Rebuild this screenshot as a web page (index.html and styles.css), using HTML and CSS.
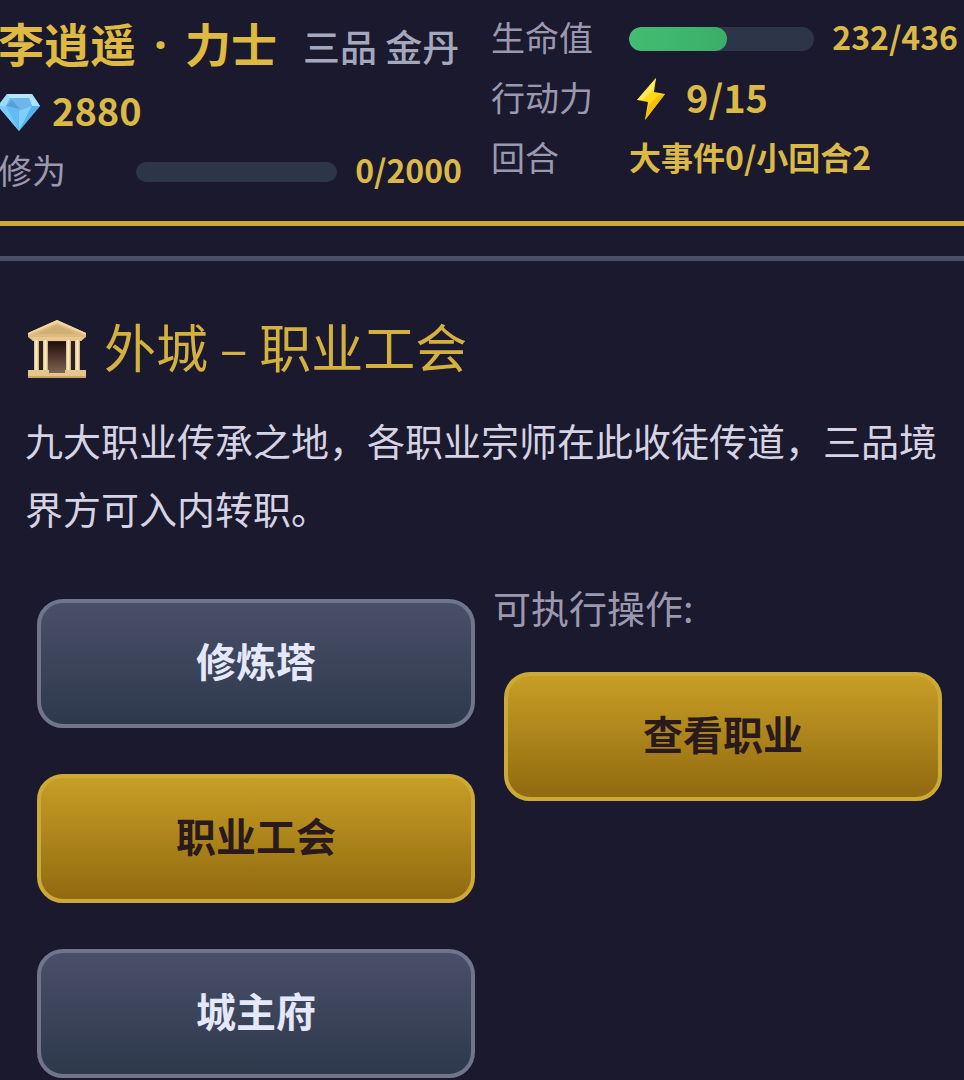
FILE: index.html
```html
<!DOCTYPE html>
<html lang="zh-CN">
<head>
<meta charset="utf-8">
<meta name="viewport" content="width=device-width, initial-scale=1">
<title>外城 – 职业工会</title>
<link rel="stylesheet" href="styles.css">
</head>
<body>
<header class="status">
  <section class="status-col status-left">
    <div class="row name-row">
      <h1 class="name">李逍遥<span class="dot">·</span>力士</h1>
      <span class="rank">三品 金丹</span>
    </div>
    <div class="row gem-row">
      <svg class="gem" viewBox="0 0 42 38" aria-hidden="true">
        <defs>
          <linearGradient id="gemFill" x1="0" y1="0" x2="1" y2="1">
            <stop offset="0" stop-color="#8fe0ff"/>
            <stop offset="1" stop-color="#2f9be8"/>
          </linearGradient>
        </defs>
        <path d="M9 1H34L42 13L21 38L0 13Z" fill="url(#gemFill)"/>
        <path d="M9 1H34L31 5H12Z" fill="#b5e6fa"/>
        <path d="M9 1L12 5L8 13H0Z" fill="#9adcf8"/>
        <path d="M34 1L31 5L34 13H42Z" fill="#a9e4fb"/>
        <path d="M12 5H31L34 13L21 18L8 13Z" fill="#6cb8ee"/>
        <path d="M14 7L22 16L8 13Z" fill="#569fdf"/>
        <path d="M0 13L8 13L21 38Z" fill="#79cdf8"/>
        <path d="M8 13L21 18V38Z" fill="#62bcf4"/>
        <path d="M34 13L21 18V38Z" fill="#7fd0fa"/>
        <path d="M34 13H42L21 38Z" fill="#55b2ef"/>
      </svg>
      <span class="value value-lg">2880</span>
    </div>
    <div class="row">
      <span class="label" id="exp">修为</span>
      <div class="bar" role="progressbar" aria-labelledby="exp" aria-valuenow="0" aria-valuemax="2000"></div>
      <span class="value">0/2000</span>
    </div>
  </section>
  <section class="status-col status-right">
    <div class="row">
      <span class="label" id="hp">生命值</span>
      <div class="bar hp-bar" role="progressbar" aria-labelledby="hp" aria-valuenow="232" aria-valuemax="436"><div class="bar-fill" style="width:53%"></div></div>
      <span class="value">232/436</span>
    </div>
    <div class="row">
      <span class="label">行动力</span>
      <svg class="bolt" viewBox="0 0 30 42" aria-hidden="true">
        <path d="M20 0L1 22L12 24L9 42L29 16L18 14Z" fill="#fdd915"/>
        <path d="M20 0L1 22L8 21L17 12Z" fill="#ffe95c"/>
        <path d="M9 42L29 16L23 17L13 27Z" fill="#f5bd0c"/>
      </svg>
      <span class="value value-lg">9/15</span>
    </div>
    <div class="row">
      <span class="label">回合</span>
      <span class="value">大事件0/小回合2</span>
    </div>
  </section>
</header>
<main class="scene">
  <h2 class="title">
    <svg class="temple" viewBox="0 0 60 60" aria-hidden="true">
      <defs>
        <linearGradient id="door" x1="0" y1="0" x2="0" y2="1">
          <stop offset="0" stop-color="#210d0b"/>
          <stop offset="1" stop-color="#816854"/>
        </linearGradient>
        <linearGradient id="pillar" x1="0" y1="0" x2="1" y2="0">
          <stop offset="0" stop-color="#d9be8a"/>
          <stop offset=".5" stop-color="#fff0c9"/>
          <stop offset="1" stop-color="#c9a56c"/>
        </linearGradient>
      </defs>
      <rect x="7" y="20" width="46" height="32" fill="#30201d"/>
      <rect x="19" y="23" width="22" height="32" fill="url(#door)"/>
      <path d="M30 1L59 14V18L54 22H6L1 18V14Z" fill="#dcba80"/>
      <path d="M30 1L59 14V16L30 4L1 16V14Z" fill="#f0d7a2"/>
      <path d="M30 6L50 15H10Z" fill="#d3ae74"/>
      <path d="M3 18H57L54 22H6Z" fill="#e8c890"/>
      <rect x="7" y="21" width="5" height="31" fill="url(#pillar)"/>
      <rect x="16" y="21" width="5" height="31" fill="url(#pillar)"/>
      <rect x="39" y="21" width="5" height="31" fill="url(#pillar)"/>
      <rect x="48" y="21" width="5" height="31" fill="url(#pillar)"/>
      <path d="M1 51H22V54H38V51H59V59H1Z" fill="#e4c58b"/>
      <rect x="1" y="57" width="58" height="2" fill="#cca369"/>
    </svg>
    <span class="title-text">外城 – 职业工会</span>
  </h2>
  <p class="desc">九大职业传承之地，各职业宗师在此收徒传道，三品境界方可入内转职。</p>
  <div class="columns">
    <nav class="places">
      <button class="btn" type="button">修炼塔</button>
      <button class="btn btn-gold" type="button">职业工会</button>
      <button class="btn" type="button">城主府</button>
    </nav>
    <section class="actions">
      <h3 class="hint">可执行操作:</h3>
      <button class="btn btn-gold" type="button">查看职业</button>
    </section>
  </div>
</main>
</body>
</html>
```
FILE: styles.css
```css
* {
  box-sizing: border-box;
}

body {
  margin: 0;
  overflow: hidden;
  background: #1b192e;
  color: #d5d3e4;
  font-family: "Noto Sans CJK SC", sans-serif;
}

h1, h2, h3, p {
  margin: 0;
}

.status {
  display: grid;
  grid-template-columns: 1fr 1fr;
  margin-left: -2px;
  padding: 9px 6px 19px 0;
  border-bottom: 5px solid #cda935;
}

.status-col {
  min-width: 0;
}

.status-left {
  padding-right: 16px;
}

.status-right {
  padding-left: 13px;
}

.row {
  display: flex;
  align-items: center;
  height: 60px;
  white-space: nowrap;
}

.name-row {
  align-items: baseline;
  height: 73px;
  line-height: 67px;
}

.gem-row {
  gap: 12px;
}

.name {
  color: #deba42;
  font-size: 46px;
  font-weight: 700;
}

.dot {
  padding: 0 18px;
  font-family: "Noto Sans", sans-serif;
}

.rank {
  margin-left: 26px;
  color: #a5a7bd;
  font-size: 37px;
  font-weight: 500;
}

.label {
  flex: none;
  width: 138px;
  padding-bottom: 6px;
  color: #9b99b0;
  font-size: 34px;
}

.value {
  padding-bottom: 6px;
  color: #dab947;
  font-size: 32px;
  font-weight: 700;
}

.value-lg {
  font-size: 38px;
}

.gem {
  width: 42px;
  height: 38px;
}

.bolt {
  width: 30px;
  height: 42px;
  margin: 0 20px 0 7px;
}

.bar {
  flex: 1;
  height: 20px;
  margin-right: 18px;
  overflow: hidden;
  border-radius: 12px;
  background: #2d3548;
}

.hp-bar {
  height: 24px;
}

.bar-fill {
  height: 100%;
  border-radius: 12px;
  background: linear-gradient(90deg, #43bd73, #3aae68);
}

.scene {
  margin-top: 30px;
  padding: 48px 11px 0 26px;
  border-top: 5px solid #4c4e66;
}

.title {
  display: flex;
  align-items: center;
  gap: 16px;
  height: 80px;
  color: #d4b13f;
  font-size: 52px;
  font-weight: 400;
}

.title-text {
  padding-bottom: 8px;
}

.temple {
  width: 62px;
  height: 60px;
}

.desc {
  margin: 17px 0 0 -1px;
  font-size: 38px;
  line-height: 68px;
}

.columns {
  display: grid;
  grid-template-columns: 1fr 1fr;
  gap: 7px;
  margin-top: 57px;
}

.places {
  display: flex;
  flex-direction: column;
  gap: 46px;
  padding: 0 11px;
}

.actions .btn {
  margin: 0 11px;
  width: calc(100% - 22px);
}

.hint {
  height: 73px;
  color: #9b99b0;
  font-size: 38px;
  font-weight: 400;
  line-height: 16px;
}

.btn {
  width: 100%;
  height: 129px;
  padding: 0 20px 8px;
  border: 4px solid #70758c;
  border-radius: 26px;
  background: linear-gradient(#4a5069, #2d384b) border-box;
  color: #e4e8fa;
  font-family: inherit;
  font-size: 40px;
  font-weight: 700;
  cursor: pointer;
}

.btn-gold {
  border-color: #cdaa37;
  background: linear-gradient(#c9a027, #8f680f) border-box;
  color: #2a1a1e;
}
```
